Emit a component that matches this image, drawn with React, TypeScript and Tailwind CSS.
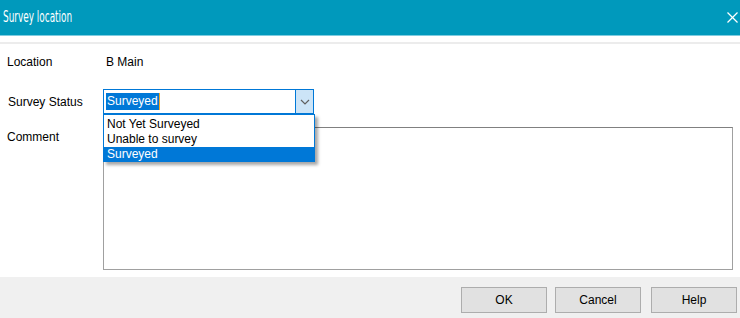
import { useState } from "react";

const options = ["Not Yet Surveyed", "Unable to survey", "Surveyed"];

function Chevron() {
  return (
    <svg width="10" height="6" viewBox="0 0 10 6" fill="none">
      <polyline points="1,1 5,5 9,1" stroke="#606060" strokeWidth="1.2" />
    </svg>
  );
}

function CloseIcon() {
  return (
    <svg width="11" height="11" viewBox="0 0 11 11" fill="none">
      <line x1="0.5" y1="0.5" x2="10.5" y2="10.5" stroke="#ffffff" strokeWidth="1.2" />
      <line x1="10.5" y1="0.5" x2="0.5" y2="10.5" stroke="#ffffff" strokeWidth="1.2" />
    </svg>
  );
}

function DialogButton({ label }: { label: string }) {
  return (
    <button className="w-[86px] h-[26px] bg-[#e1e1e1] border border-[#adadad] text-[12px] text-black">
      {label}
    </button>
  );
}

export default function App() {
  const [status] = useState("Surveyed");

  return (
    <div
      className="w-[740px] h-[318px] flex flex-col bg-white overflow-hidden text-[12px] text-black"
      style={{ fontFamily: '"Liberation Sans", Arial, sans-serif' }}
    >
      {/* title bar */}
      <div className="h-[35px] bg-[#0099bc] flex items-center justify-between pl-[3px] pr-[2px] shrink-0">
        <span
          className="text-white text-[15px] origin-left scale-x-[0.66] inline-block"
          style={{ fontFamily: '"DejaVu Sans Condensed", "Liberation Sans", sans-serif' }}
        >
          Survey location
        </span>
        <CloseIcon />
      </div>
      <div className="h-px bg-[#7fcce0] shrink-0" />
      <div className="h-[6px] shrink-0" />
      <div className="h-[2px] bg-[#ececec] shrink-0" />

      {/* form */}
      <div className="flex-1 flex flex-col pl-[7px] pt-[8px]">
        <div className="flex items-center h-[20px]">
          <span className="w-[96px]">Location</span>
          <span className="pl-[3px]">B Main</span>
        </div>

        <div className="flex items-center h-[25px] mt-[17px]">
          <span className="w-[96px] pl-px">Survey Status</span>
          <div className="relative w-[211px] h-[25px] z-10">
            <div className="w-full h-full border border-[#0078d7] flex items-stretch">
              <div className="flex-1 flex items-center pl-[2px]">
                <span className="bg-[#0078d7] text-white px-px leading-[17px] border-r border-[#f5a623]">
                  {status}
                </span>
              </div>
              <div className="w-[18px] bg-[#cce4f7] border-l border-[#0078d7] flex items-center justify-center">
                <Chevron />
              </div>
            </div>
            <div className="absolute left-0 top-[25px] w-[212px] h-[48px] bg-white border border-[#0078d7] pt-[2px] shadow-[3px_3px_3px_rgba(0,0,0,0.35)]">
              {options.map((o) => (
                <div
                  key={o}
                  className={
                    o === status
                      ? "h-[15px] leading-[15px] pl-[3px] bg-[#0078d7] text-white"
                      : "h-[15px] leading-[15px] pl-[3px]"
                  }
                >
                  {o}
                </div>
              ))}
            </div>
          </div>
        </div>

        <div className="flex items-start mt-[13px]">
          <span className="w-[96px] pt-[1px]">Comment</span>
          <div className="w-[630px] h-[143px] border border-[#a0a0a0] border-t-[#808080]" />
        </div>
      </div>

      {/* footer */}
      <div className="h-[41px] bg-[#f0f0f0] shrink-0 flex justify-end items-start pt-[10px] pr-[3px] gap-[8px]">
        <DialogButton label="OK" />
        <DialogButton label="Cancel" />
        <div className="pl-[2px]">
          <DialogButton label="Help" />
        </div>
      </div>
    </div>
  );
}
